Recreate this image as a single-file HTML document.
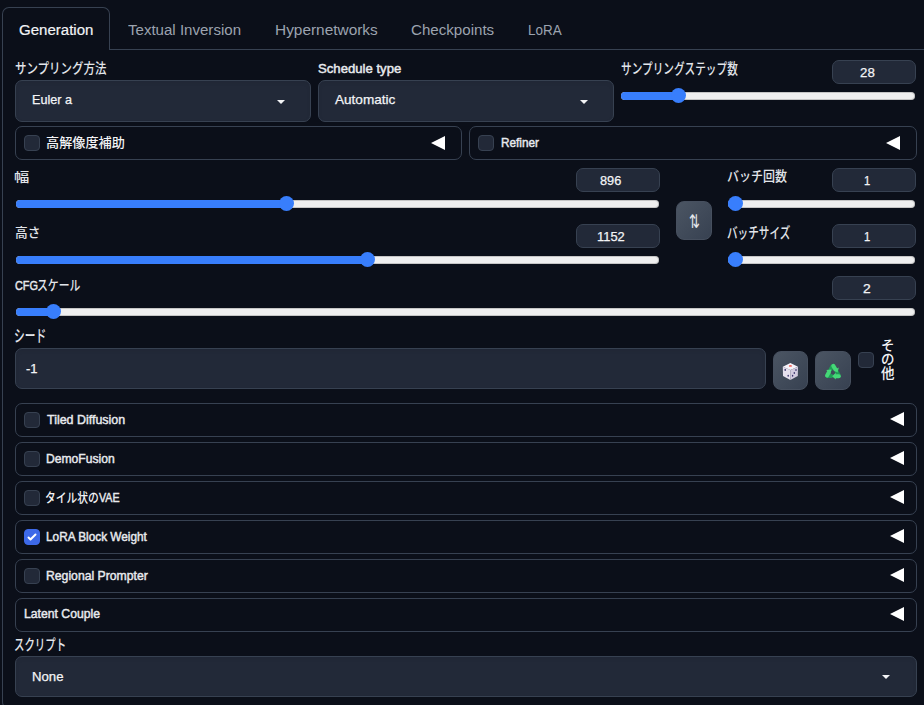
<!DOCTYPE html>
<html lang="ja">
<head>
<meta charset="utf-8">
<title>txt2img - Generation</title>
<style>
*{box-sizing:border-box;margin:0;padding:0}
html,body{width:924px;height:705px;overflow:hidden;background:#0b0f19}
body{position:relative;font-family:"Liberation Sans","Noto Sans CJK JP",sans-serif;color:#f3f4f6;font-size:13px;line-height:1}
/* text */
.t{position:absolute;white-space:nowrap;line-height:18px;color:#f3f4f6;transform-origin:0 50%}
.tab{color:#9ca3af}
.tabon{color:#f3f4f6;-webkit-text-stroke:0.2px #f3f4f6}
.lat{-webkit-text-stroke:0.45px #e8eaee;color:#e8eaee}
.latr{-webkit-text-stroke:0.25px #f3f4f6}
.jp{font-weight:500;color:#e2e5ea}
.jpc{font-weight:500}
/* tab strip */
.tabline{position:absolute;left:109px;right:0;top:49px;height:1px;background:#374151}
.tab-active{position:absolute;left:2px;top:7px;width:108px;height:43px;border:1px solid #374151;border-bottom:none;border-radius:7px 7px 0 0}
.panel{position:absolute;left:2px;top:49px;width:940px;height:660px;border:1px solid #374151;border-top:none;border-radius:0 0 7px 7px}
/* inputs */
.box{position:absolute;background:#222938;border:1px solid #374151;border-radius:7px;box-shadow:inset 0 2px 4px rgba(0,0,0,.05)}
.num{position:absolute;background:#222938;border:1px solid #374151;border-radius:7px;height:24px;width:84px}
.acc{position:absolute;left:15px;width:902px;height:34px;border:1px solid #374151;border-radius:7px}
.cb{position:absolute;width:16px;height:16px;background:#222938;border:1px solid #374151;border-radius:4px}
.cb.on{background:#3d69e8;border-color:#3d69e8}
.cb svg{position:absolute;left:-1px;top:-1px}
.tri{position:absolute;width:0;height:0;border-top:7.5px solid transparent;border-bottom:7.5px solid transparent;border-right:14px solid #fff}
.caret{position:absolute;width:0;height:0;border-left:4px solid transparent;border-right:4px solid transparent;border-top:4px solid #f3f4f6}
/* sliders */
.trk{position:absolute;height:8px;border-radius:4px;background:#efefef;box-shadow:inset 0 0 0 1px rgba(120,120,120,.35)}
.fill{position:absolute;left:0;top:0;height:8px;border-radius:4px;background:#387efc}
.thumb{position:absolute;top:-4px;width:15px;height:15px;border-radius:50%;background:#387efc}
.btn{position:absolute;border:1px solid #464f5e;border-radius:8px;background:linear-gradient(to bottom right,#4b5563,#374151)}
.ico{position:absolute}
.swap{position:absolute;left:687.5px;top:210.3px;font-family:"DejaVu Sans","Liberation Sans",sans-serif;font-size:15px;line-height:24px;color:#e5e7eb;transform-origin:50% 50%;transform:scale(0.86,1.26)}
.vert{position:absolute;left:881px;top:339px;width:14px;font-size:13.5px;line-height:14px;font-weight:500;color:#f3f4f6;white-space:normal;word-break:break-all}
</style>
</head>
<body>
<!-- tab strip -->
<div class="panel"></div>
<div class="tabline"></div>
<div class="tab-active"></div>

<!-- row 1: sampler / schedule / steps -->
<div class="box" style="left:15px;top:80px;width:296px;height:42px"></div>
<div class="caret" style="left:277px;top:100px"></div>
<div class="box" style="left:318px;top:80px;width:296px;height:42px"></div>
<div class="caret" style="left:580px;top:100px"></div>
<div class="num" style="left:832px;top:60px"></div>
<div class="trk" style="left:621px;top:92px;width:294px"><div class="fill" style="width:60px"></div><div class="thumb" style="left:50.3px"></div></div>

<!-- row 2: hires / refiner -->
<div class="acc" style="left:15px;top:126px;width:447px"></div>
<div class="cb" style="left:24px;top:135px"></div>
<div class="tri" style="left:431px;top:136px"></div>
<div class="acc" style="left:469px;top:126px;width:448px"></div>
<div class="cb" style="left:478px;top:135px"></div>
<div class="tri" style="left:886px;top:136px"></div>

<!-- width / height -->
<div class="num" style="left:576px;top:168px"></div>
<div class="trk" style="left:16px;top:200px;width:643px"><div class="fill" style="width:273px"></div><div class="thumb" style="left:263px"></div></div>
<div class="num" style="left:576px;top:224px"></div>
<div class="trk" style="left:16px;top:256px;width:643px"><div class="fill" style="width:354px"></div><div class="thumb" style="left:344.1px"></div></div>

<div class="btn" style="left:676px;top:201px;width:36px;height:39px"></div>
<span class="swap">⇅</span>

<!-- batch -->
<div class="num" style="left:832px;top:168px"></div>
<div class="trk" style="left:728px;top:200px;width:187px"><div class="fill" style="width:10px"></div><div class="thumb" style="left:-0.2px"></div></div>
<div class="num" style="left:832px;top:224px"></div>
<div class="trk" style="left:728px;top:256px;width:187px"><div class="fill" style="width:10px"></div><div class="thumb" style="left:-0.2px"></div></div>

<!-- CFG -->
<div class="num" style="left:832px;top:276px"></div>
<div class="trk" style="left:16px;top:308px;width:899px"><div class="fill" style="width:40px"></div><div class="thumb" style="left:30px"></div></div>

<!-- seed -->
<div class="box" style="left:15px;top:348px;width:751px;height:41px"></div>
<div class="btn" style="left:773px;top:351px;width:35px;height:39px"></div>
<svg class="ico" style="left:782px;top:362px" width="17" height="19" viewBox="0 0 17 19">
<path d="M8.4 1 L16 4.7 L8.4 8 L0.8 4.7 Z" fill="#f6f3fa"/>
<path d="M0.8 4.7 L8.4 8 L8.4 17.9 L1 13.9 Z" fill="#e6e1ee"/>
<path d="M8.4 8 L16 4.7 L15.8 13.9 L8.4 17.9 Z" fill="#d2cbdf"/>
<ellipse cx="8.4" cy="3.9" rx="1.6" ry="0.95" fill="#f2665c"/>
<ellipse cx="3.2" cy="7.9" rx="0.75" ry="1.05" fill="#37306a"/><ellipse cx="6.2" cy="13.7" rx="0.75" ry="1.05" fill="#37306a"/>
<ellipse cx="14" cy="8.1" rx="0.7" ry="1" fill="#37306a"/><ellipse cx="12.3" cy="11" rx="0.7" ry="1" fill="#37306a"/><ellipse cx="10.6" cy="13.8" rx="0.7" ry="1" fill="#37306a"/>
</svg>
<div class="btn" style="left:815px;top:351px;width:36px;height:39px"></div>
<svg class="ico" style="left:824px;top:363px" width="18" height="17" viewBox="0 0 18 17">
<g fill="none" stroke-linecap="round">
<path d="M8.5 3 L6.4 6.6" stroke="#1f9d55" stroke-width="3.8"/>
<path d="M12.6 8.6 L14.8 12.2" stroke="#1f9d55" stroke-width="3.8"/>
<path d="M3.6 13 L7.4 13" stroke="#1f9d55" stroke-width="3.8"/>
<path d="M9.3 2.9 L11.4 6.4" stroke="#45d877" stroke-width="4"/>
<path d="M4.6 9.6 L3 12.6" stroke="#45d877" stroke-width="4"/>
<path d="M11.4 13.2 L14.8 13.2" stroke="#45d877" stroke-width="4"/>
</g>
<path d="M9.6 7.2 L14.8 4.4 L13.6 9.6 Z" fill="#45d877"/>
<path d="M2.2 7 L7.4 6.4 L6.4 11 Z" fill="#45d877"/>
<path d="M11.8 9.8 L8.2 13.2 L11.8 16.4 Z" fill="#45d877"/>
</svg>
<div class="cb" style="left:858px;top:352px"></div>
<div class="vert">その他</div>

<!-- accordions -->
<div class="acc" style="top:403px"></div><div class="cb" style="left:24px;top:412px"></div><div class="tri" style="left:890px;top:412px"></div>
<div class="acc" style="top:442px"></div><div class="cb" style="left:24px;top:451px"></div><div class="tri" style="left:890px;top:451px"></div>
<div class="acc" style="top:481px"></div><div class="cb" style="left:24px;top:490px"></div><div class="tri" style="left:890px;top:490px"></div>
<div class="acc" style="top:520px"></div><div class="cb on" style="left:24px;top:529px"><svg width="16" height="16" viewBox="0 0 16 16"><path d="M12.207 4.793a1 1 0 010 1.414l-5 5a1 1 0 01-1.414 0l-2-2a1 1 0 011.414-1.414L6.5 9.086l4.293-4.293a1 1 0 011.414 0z" fill="#fff"/></svg></div><div class="tri" style="left:890px;top:529px"></div>
<div class="acc" style="top:559px"></div><div class="cb" style="left:24px;top:568px"></div><div class="tri" style="left:890px;top:568px"></div>
<div class="acc" style="top:598px"></div><div class="tri" style="left:890px;top:607px"></div>

<!-- script dropdown -->
<div class="box" style="left:15px;top:656px;width:902px;height:41px"></div>
<div class="caret" style="left:882px;top:675px"></div>

<!-- text -->
<span id="t1" class="t tabon" style="left:19.22px;top:21.24px;font-size:15.50px;transform:scaleX(0.9696)">Generation</span>
<span id="t2" class="t tab" style="left:128.03px;top:20.50px;font-size:15.50px;transform:scaleX(0.9716)">Textual Inversion</span>
<span id="t3" class="t tab" style="left:274.63px;top:21.05px;font-size:15.50px;transform:scaleX(0.9941)">Hypernetworks</span>
<span id="t4" class="t tab" style="left:411.24px;top:21.25px;font-size:15.50px;transform:scaleX(0.9752)">Checkpoints</span>
<span id="t5" class="t tab" style="left:528.09px;top:20.70px;font-size:15.50px;transform:scaleX(0.8676)">LoRA</span>
<span id="l1" class="t jp" style="left:14.64px;top:59.03px;font-size:14.09px;transform:scaleX(0.8150)">サンプリング方法</span>
<span id="v1" class="t latr" style="left:32.31px;top:91.02px;font-size:13.00px;transform:scaleX(0.9711)">Euler a</span>
<span id="l2" class="t lat" style="left:317.64px;top:59.94px;font-size:13.00px;transform:scaleX(1.0102)">Schedule type</span>
<span id="v2" class="t latr" style="left:334.50px;top:91.39px;font-size:13.00px;transform:scaleX(1.0440)">Automatic</span>
<span id="l3" class="t jp" style="left:621.23px;top:59.56px;font-size:14.35px;transform:scaleX(0.7424)">サンプリングステップ数</span>
<span id="n1" class="t latr" style="left:859.85px;top:63.82px;font-size:13.00px;transform:scaleX(1.0202)">28</span>
<span id="c1" class="t jpc" style="left:45.95px;top:133.82px;font-size:12.56px;transform:scaleX(1.0476)">高解像度補助</span>
<span id="c2" class="t lat" style="left:501.06px;top:134.10px;font-size:13.00px;transform:scaleX(0.9068)">Refiner</span>
<span id="l4" class="t jp" style="left:13.98px;top:168.52px;font-size:12.47px;transform:scaleX(1.2219)">幅</span>
<span id="n2" class="t latr" style="left:600.37px;top:172.24px;font-size:13.00px;transform:scaleX(0.9834)">896</span>
<span id="l5" class="t jp" style="left:14.85px;top:223.94px;font-size:12.89px;transform:scaleX(0.9851)">高さ</span>
<span id="n3" class="t latr" style="left:597.10px;top:228.12px;font-size:13.00px;transform:scaleX(0.9911)">1152</span>
<span id="l6" class="t jp" style="left:727.39px;top:167.60px;font-size:13.79px;transform:scaleX(0.8714)">バッチ回数</span>
<span id="n4" class="t latr" style="left:863.77px;top:172.02px;font-size:13.00px;transform:scaleX(0.8688)">1</span>
<span id="l7" class="t jp" style="left:727.44px;top:223.68px;font-size:14.84px;transform:scaleX(0.7152)">バッチサイズ</span>
<span id="n5" class="t latr" style="left:863.77px;top:228.32px;font-size:13.00px;transform:scaleX(0.8688)">1</span>
<span id="l8a" class="t lat" style="left:15.31px;top:276.86px;font-size:13.00px;transform:scaleX(0.8366)">CFG</span>
<span id="l8b" class="t jp" style="left:37.15px;top:276.03px;font-size:13.94px;transform:scaleX(0.7779)">スケール</span>
<span id="n6" class="t latr" style="left:862.96px;top:279.82px;font-size:13.00px;transform:scaleX(1.0673)">2</span>
<span id="l9" class="t jp" style="left:14.13px;top:328.47px;font-size:16.60px;transform:scaleX(0.6478)">シード</span>
<span id="v3" class="t latr" style="left:25.87px;top:360.12px;font-size:13.00px;transform:scaleX(1.0014)">-1</span>
<span id="a1" class="t lat" style="left:46.77px;top:410.50px;font-size:13.00px;transform:scaleX(0.9580)">Tiled Diffusion</span>
<span id="a2" class="t lat" style="left:46.38px;top:450.40px;font-size:13.00px;transform:scaleX(0.9327)">DemoFusion</span>
<span id="a3a" class="t jpc" style="left:45.06px;top:489.31px;font-size:12.97px;transform:scaleX(0.8298)">タイル状の</span>
<span id="a3b" class="t lat" style="left:98.96px;top:489.00px;font-size:13.00px;transform:scaleX(0.8240)">VAE</span>
<span id="a4" class="t lat" style="left:45.89px;top:527.91px;font-size:13.00px;transform:scaleX(0.9087)">LoRA Block Weight</span>
<span id="a5" class="t lat" style="left:45.81px;top:566.68px;font-size:13.00px;transform:scaleX(0.9393)">Regional Prompter</span>
<span id="a6" class="t lat" style="left:24.41px;top:604.69px;font-size:13.00px;transform:scaleX(0.9399)">Latent Couple</span>
<span id="l10" class="t jp" style="left:14.45px;top:636.26px;font-size:14.99px;transform:scaleX(0.6958)">スクリプト</span>
<span id="v4" class="t latr" style="left:31.68px;top:668.13px;font-size:13.00px;transform:scaleX(1.0121)">None</span>
</body>
</html>
